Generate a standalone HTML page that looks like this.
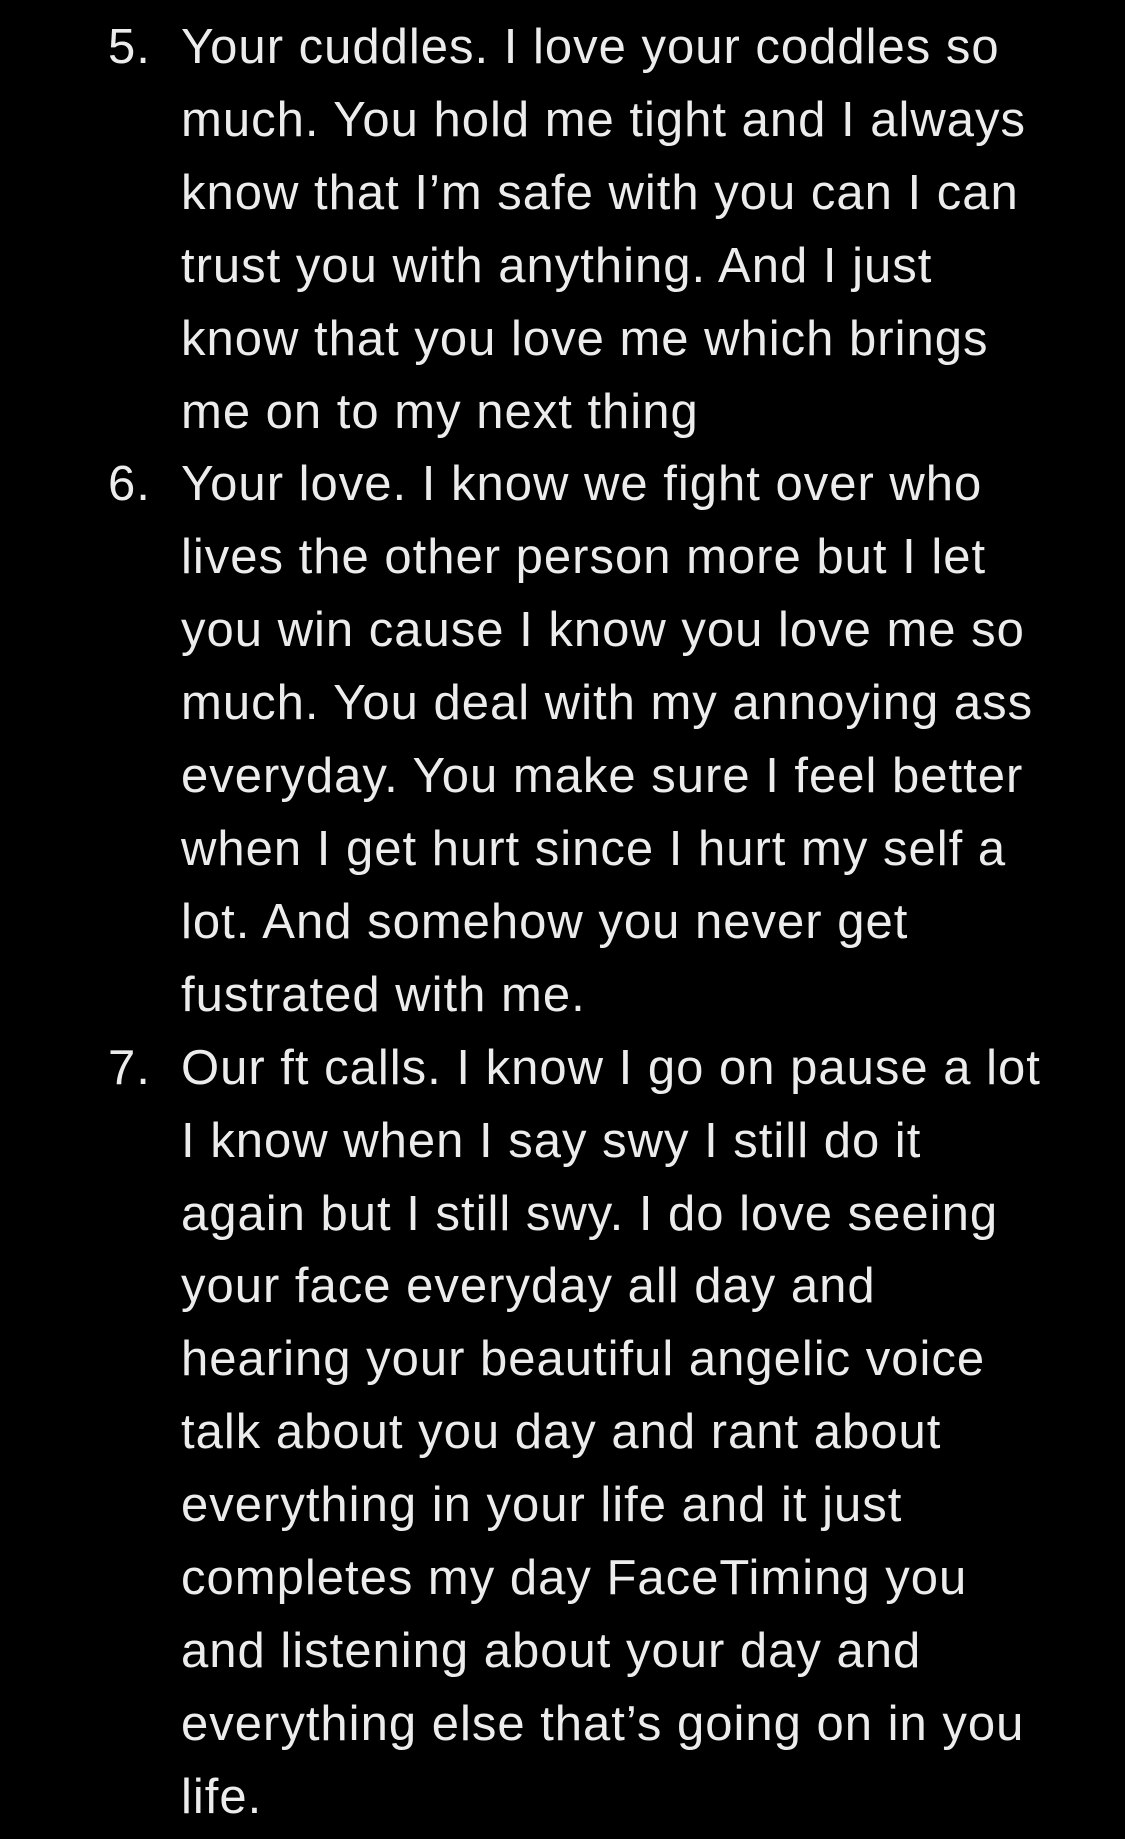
<!DOCTYPE html>
<html><head><meta charset="utf-8"><style>
html,body{margin:0;padding:0;background:#000;}
body{width:1125px;height:1839px;overflow:hidden;position:relative;}
.t{position:absolute;top:11px;left:0;font-family:"Liberation Sans",sans-serif;font-size:49px;line-height:72.9px;letter-spacing:1px;color:#ececec;white-space:nowrap;}
.item{position:relative;padding-left:181px;}
.n{position:absolute;left:108px;}
</style></head><body>
<div class="t">
<div class="item"><span class="n">5.</span>Your cuddles. I love your coddles so<br>much. You hold me tight and I always<br>know that I’m safe with you can I can<br>trust you with anything. And I just<br>know that you love me which brings<br>me on to my next thing</div>
<div class="item"><span class="n">6.</span>Your love. I know we fight over who<br>lives the other person more but I let<br>you win cause I know you love me so<br>much. You deal with my annoying ass<br>everyday. You make sure I feel better<br>when I get hurt since I hurt my self a<br>lot. And somehow you never get<br>fustrated with me.</div>
<div class="item"><span class="n">7.</span>Our ft calls. I know I go on pause a lot<br>I know when I say swy I still do it<br>again but I still swy. I do love seeing<br>your face everyday all day and<br>hearing your beautiful angelic voice<br>talk about you day and rant about<br>everything in your life and it just<br>completes my day FaceTiming you<br>and listening about your day and<br>everything else that’s going on in you<br>life.</div>
</div>
</body></html>
